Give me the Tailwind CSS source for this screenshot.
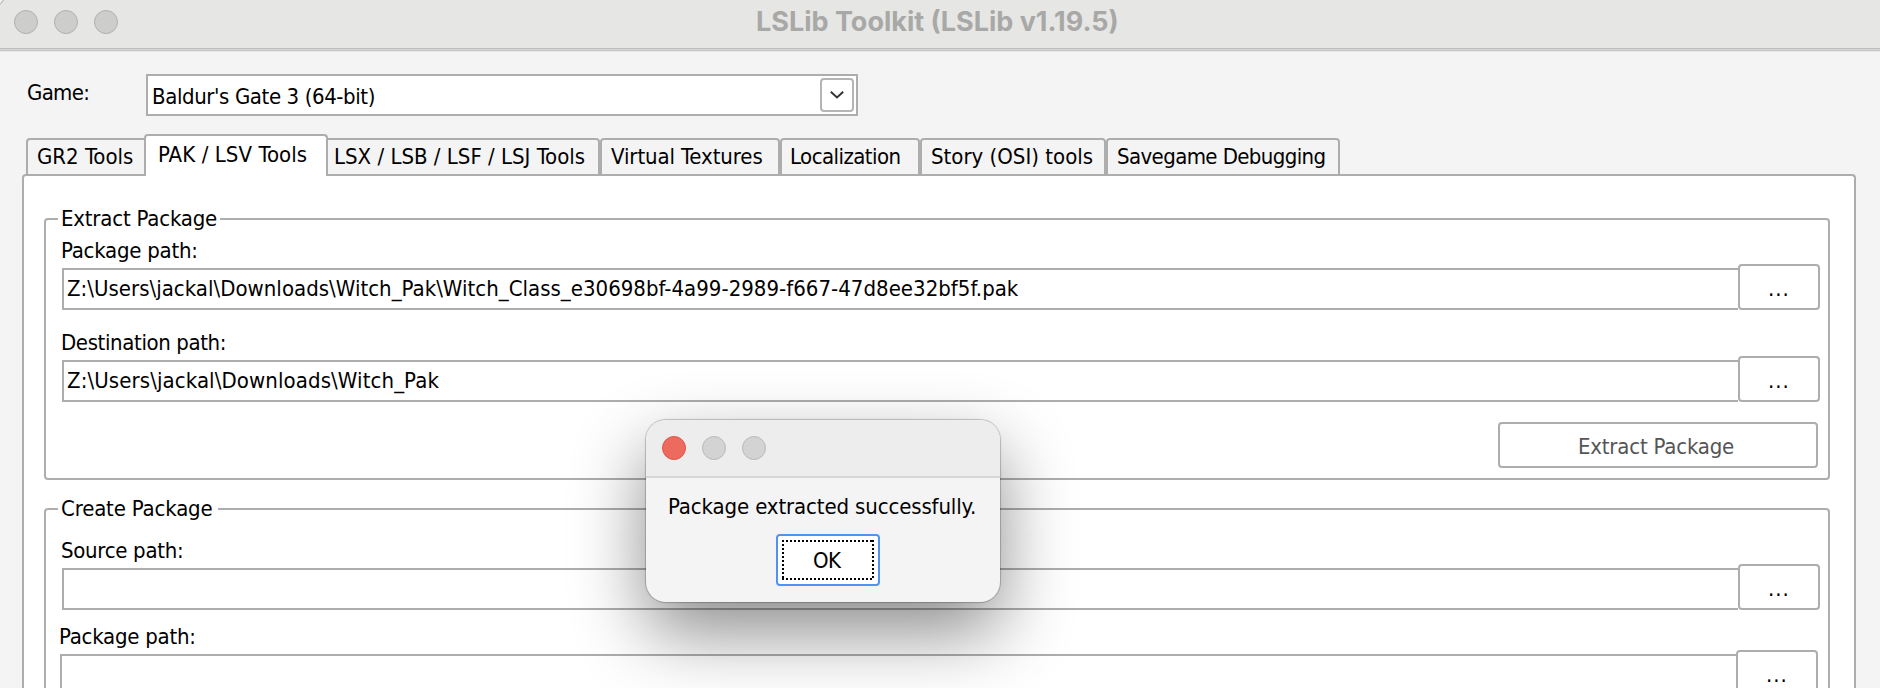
<!DOCTYPE html>
<html lang="en">
<head>
<meta charset="utf-8">
<title>LSLib Toolkit</title>
<script src="https://cdn.jsdelivr.net/npm/@tailwindcss/browser@4"></script>
</head>
<body>
<div class="relative w-[1880px] h-[688px] overflow-hidden bg-[#f4f4f4] text-black text-[22px] leading-[24px] font-['DejaVu_Sans_Condensed','DejaVu_Sans',sans-serif] font-stretch-condensed">

<svg class="absolute left-0 top-0" width="6" height="6" fill="none"><path d="M0 0H3L0 4Z" fill="#f2f2f2"/><path d="M0 4.5L3.5 0" stroke="#a9a9a9" stroke-width="1"/></svg>
<header class="h-[52px] bg-[#e6e6e4]">
  <div class="flex items-start h-[48px]">
    <div class="flex gap-4 pl-[14px] pt-[10px] w-[744px]">
      <span class="size-6 rounded-full bg-[#cdcdcc] border border-[#b0b0af]"></span>
      <span class="size-6 rounded-full bg-[#cdcdcc] border border-[#b0b0af]"></span>
      <span class="size-6 rounded-full bg-[#cdcdcc] border border-[#b0b0af]"></span>
    </div>
    <h1 class="pt-[7px] pl-[12px] font-['Inter',sans-serif] font-bold text-[27px] leading-[30px] text-[#a8a8a7] whitespace-nowrap">LSLib Toolkit (LSLib v1.19.5)</h1>
  </div>
  <div class="h-px bg-[#bebebd]"></div>
  <div class="h-px bg-[#d6d6d5]"></div>
  <div class="h-px bg-[#c6c6c6]"></div>
  <div class="h-px bg-[#e8e8e8]"></div>
</header>

<div class="flex h-[82px] whitespace-nowrap">
  <div class="w-[146px] pl-[27px] pt-[29px] tracking-[-0.7px]">Game:</div>
  <div class="mt-[22px] w-[712px] h-[42px] border-2 border-[#adadad] bg-white flex justify-between">
    <div class="pl-[4px] pt-[9px] tracking-[-0.4px]">Baldur's Gate 3 (64-bit)</div>
    <div class="m-[2px] size-[34px] rounded-[4px] border-2 border-[#b4b4b4] bg-white flex items-center justify-center">
      <svg width="14" height="8" viewBox="0 0 14 8" fill="none" stroke="#333" stroke-width="2"><path d="M.8.8L7 6.4 13.2.8"/></svg>
    </div>
  </div>
</div>

<nav class="relative z-10 flex items-end h-[42px] pl-[26px] whitespace-nowrap">
  <div class="w-[118px] h-[38px] border-2 border-r-0 border-[#adadad] rounded-tl-[4px] pt-[5px] pl-[9px]">GR2 Tools</div>
  <div class="w-[184px] h-[42px] border-2 border-b-0 border-[#adadad] rounded-t-[4px] bg-white pt-[7px] pl-[12px] tracking-[0.08px]">PAK / LSV Tools</div>
  <div class="w-[272px] h-[38px] border-2 border-l-0 border-[#adadad] rounded-tr-[4px] pt-[5px] pl-[6px]">LSX / LSB / LSF / LSJ Tools</div>
  <div class="w-[180px] h-[38px] border-2 border-[#adadad] rounded-t-[4px] pt-[5px] pl-[9px] tracking-[-0.1px]">Virtual Textures</div>
  <div class="w-[140px] h-[38px] border-2 border-[#adadad] rounded-t-[4px] pt-[5px] pl-[8px] tracking-[-0.55px]">Localization</div>
  <div class="w-[186px] h-[38px] border-2 border-[#adadad] rounded-t-[4px] pt-[5px] pl-[9px]">Story (OSI) tools</div>
  <div class="w-[234px] h-[38px] border-2 border-[#adadad] rounded-t-[4px] pt-[5px] pl-[9px] tracking-[-0.6px]">Savegame Debugging</div>
</nav>

<main class="-mt-[2px] ml-[22px] w-[1834px] h-[514px] overflow-hidden border-2 border-b-0 border-[#adadad] rounded-t-[4px] bg-white pt-[31px] pl-[20px] whitespace-nowrap">
  <fieldset class="w-[1786px] h-[273px] border-2 border-[#adadad] rounded-[4px]">
    <legend class="ml-[12px] pl-[3px] w-[162px] h-[24px] tracking-[-0.2px]">Extract Package</legend>
    <div class="mt-2 pl-[15px] h-6 tracking-[-0.25px]">Package path:</div>
    <div class="mt-px ml-4 flex items-end">
      <div class="w-[1676px] h-[42px] border-2 border-r-0 border-[#adadad] pt-[7px] pl-[3px] tracking-[0.02px]">Z:\Users\jackal\Downloads\Witch_Pak\Witch_Class_e30698bf-4a99-2989-f667-47d8ee32bf5f.pak</div>
      <div class="w-[82px] h-[46px] border-2 border-[#adadad] rounded-[4px] pt-[11px] pl-[28px] tracking-[1px]">...</div>
    </div>
    <div class="mt-[21px] pl-[15px] h-6 tracking-[-0.38px]">Destination path:</div>
    <div class="mt-px ml-4 flex items-end">
      <div class="w-[1676px] h-[42px] border-2 border-r-0 border-[#adadad] pt-[7px] pl-[3px] tracking-[0.1px]">Z:\Users\jackal\Downloads\Witch_Pak</div>
      <div class="w-[82px] h-[46px] border-2 border-[#adadad] rounded-[4px] pt-[11px] pl-[28px] tracking-[1px]">...</div>
    </div>
    <div class="mt-5 ml-[1452px] w-[320px] h-[46px] border-2 border-[#adadad] rounded-[4px] pt-[11px] pl-[78px] text-[#555] tracking-[-0.2px]">Extract Package</div>
  </fieldset>

  <fieldset class="mt-[17px] w-[1786px] h-[273px] border-2 border-[#adadad] rounded-[4px]">
    <legend class="ml-[12px] pl-[3px] w-[160px] h-[24px] tracking-[-0.17px]">Create Package</legend>
    <div class="mt-[18px] pl-[15px] h-6 tracking-[-0.3px]">Source path:</div>
    <div class="mt-px ml-4 flex items-end">
      <div class="w-[1676px] h-[42px] border-2 border-r-0 border-[#adadad]"></div>
      <div class="w-[82px] h-[46px] border-2 border-[#adadad] rounded-[4px] pt-[11px] pl-[28px] tracking-[1px]">...</div>
    </div>
    <div class="mt-[15px] pl-[13px] h-6 tracking-[-0.25px]">Package path:</div>
    <div class="mt-px ml-[14px] flex items-end">
      <div class="w-[1676px] h-[42px] border-2 border-r-0 border-[#adadad]"></div>
      <div class="w-[82px] h-[46px] border-2 border-[#adadad] rounded-[4px] pt-[11px] pl-[28px] tracking-[1px]">...</div>
    </div>
  </fieldset>
</main>

<section class="absolute z-20 left-[646px] top-[420px] w-[354px] h-[182px] rounded-[20px] bg-[#f4f4f4] overflow-hidden whitespace-nowrap shadow-[0_0_1px_1px_rgba(0,0,0,0.22),0_30px_72px_rgba(0,0,0,0.46)]">
  <div class="flex gap-4 h-[58px] pl-4 pt-4 bg-[#ededed] border-b-2 border-[#d6d6d6]">
    <span class="size-6 rounded-full bg-[#ed6a5f] border border-[#dd5548]"></span>
    <span class="size-6 rounded-full bg-[#d3d3d3] border border-[#b9b9b9]"></span>
    <span class="size-6 rounded-full bg-[#d3d3d3] border border-[#b9b9b9]"></span>
  </div>
  <div class="pt-[17px] pl-[22px] h-[56px] tracking-[-0.13px]">Package extracted successfully.</div>
  <div class="ml-[130px] w-[104px] h-[52px] rounded-[4px] border-2 border-[#4f94f0] bg-white p-1">
    <div class="relative w-[92px] h-10 pt-[9px] pl-[31px] tracking-[-0.5px]">
      <svg class="absolute inset-0" width="92" height="40" fill="none" stroke="#000" stroke-width="2" stroke-dasharray="2 2" shape-rendering="crispEdges"><path d="M0 1H92M0 39H92M1 0V40M91 0V40"/></svg>
      OK
    </div>
  </div>
</section>
</div>
</body>
</html>
